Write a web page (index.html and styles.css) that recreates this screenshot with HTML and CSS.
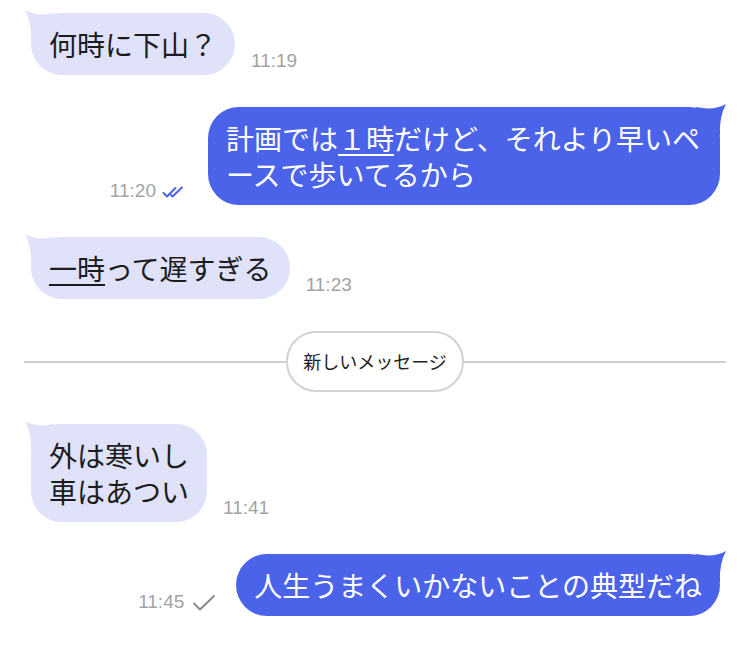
FILE: index.html
```html
<!DOCTYPE html>
<html lang="ja">
<head>
    <meta charset="UTF-8">
    <meta name="viewport" content="width=device-width, initial-scale=1.0">
    <title>チャット</title>
    <link rel="stylesheet" href="styles.css">
</head>
<body>

<div class="chat">

    <div class="row in">
        <div class="bubble">何時に下山？</div>
        <span class="time">11:19</span>
    </div>

    <div class="row out">
        <span class="time">11:20</span>
        <svg class="check double" viewBox="0 0 28 14" width="28" height="14">
            <path d="M1.5 8 L5 11.5 L13.5 3" />
            <path d="M9 10 L10.5 11.5 L20 2.5" />
        </svg>
        <div class="bubble wide">計画では<u>１時</u>だけど、それより早いペースで歩いてるから</div>
    </div>

    <div class="row in">
        <div class="bubble"><u>一時</u>って遅すぎる</div>
        <span class="time">11:23</span>
    </div>

    <div class="divider">
        <span class="pill">新しいメッセージ</span>
    </div>

    <div class="row in">
        <div class="bubble">外は寒いし<br>車はあつい</div>
        <span class="time">11:41</span>
    </div>

    <div class="row out">
        <span class="time">11:45</span>
        <svg class="check single" viewBox="0 0 24 18" width="24" height="18">
            <path d="M2 9.5 L8 15.5 L22 2" />
        </svg>
        <div class="bubble">人生うまくいかないことの典型だね</div>
    </div>

</div>

</body>
</html>
```

FILE: styles.css
```css
body {
    margin: 0;
    background: #fff;
    font-family: "Noto Sans CJK JP", "Noto Sans", sans-serif;
}
.chat {
    display: flex;
    flex-direction: column;
    gap: 32px;
    padding: 13px 30px 0 31px;
}
.row {
    display: flex;
    align-items: flex-end;
}
.row.out {
    justify-content: flex-end;
}
.bubble {
    position: relative;
    z-index: 0;
    font-size: 28px;
    line-height: 36px;
    padding: 13px 18px;
    border-radius: 31px;
    background: #dfe2f9;
    color: #1c1c1e;
}
.bubble u {
    text-decoration-thickness: 2px;
    text-underline-offset: 4px;
}
.bubble::before {
    content: "";
    position: absolute;
    z-index: -1;
    top: -4px;
    width: 32px;
    height: 32px;
    background: inherit;
}
.row.in .bubble::before {
    left: -8px;
    clip-path: path('M2 1 Q 14 8, 32 4 L 32 32 L 8 32 Q 9 14, 2 1 Z');
}
.row.out .bubble {
    background: #4b63e9;
    color: #fff;
}
.row.out .bubble::before {
    right: -8px;
    clip-path: path('M30 1 Q 18 8, 0 4 L 0 32 L 24 32 Q 23 14, 30 1 Z');
}
.bubble.wide {
    max-width: 476px;
}
.time {
    font-family: "Liberation Sans", Arial, sans-serif;
    font-size: 19px;
    color: #a3a3a3;
    margin-bottom: 3px;
}
.row.in .time {
    margin-left: 16px;
}
.check {
    fill: none;
    stroke-width: 2;
    stroke-linecap: round;
    stroke-linejoin: round;
    margin: 0 18px 6px 6px;
}
.check.double {
    stroke: #4b63e9;
}
.check.single {
    stroke: #8a8a8a;
    margin: 0 20px 4px 8px;
}
.divider {
    display: flex;
    align-items: center;
    margin: 0 -6px 0 -7px;
}
.divider::before, .divider::after {
    content: "";
    flex: 1;
    height: 2px;
    background: #cfcfcf;
}
.pill {
    font-size: 18px;
    color: #222;
    padding: 0 15px;
    height: 57px;
    line-height: 57px;
    border: 2px solid #d2d2d2;
    border-radius: 30px;
}
```
